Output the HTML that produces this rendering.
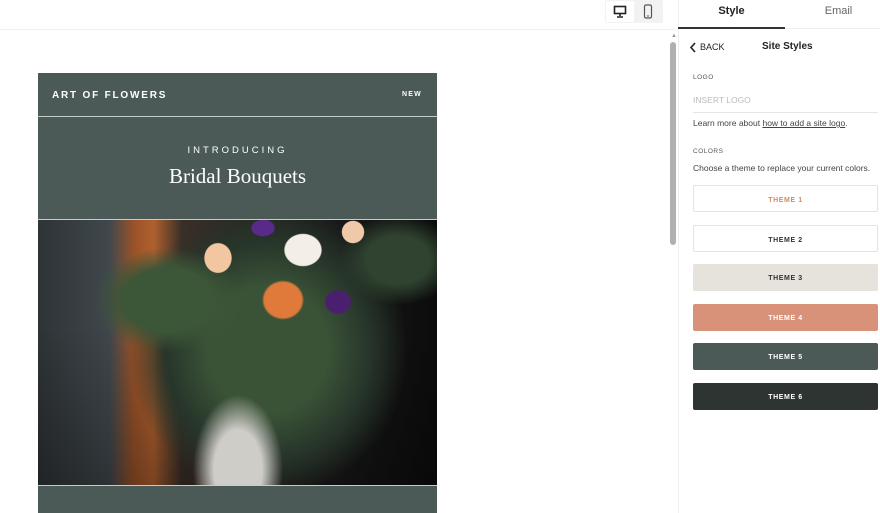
<!DOCTYPE html>
<html><head><style>
*{margin:0;padding:0;box-sizing:border-box}
body{width:880px;height:513px;overflow:hidden;background:#fff;font-family:"Liberation Sans",sans-serif;position:relative}
.abs{position:absolute}
.topline{left:0;top:29px;width:678px;height:1px;background:#f0f0f0}
.dev{left:605px;top:0;width:58px;height:23px;background:#f2f2f2;border-radius:2px}
.panel{left:678px;top:0;width:202px;height:513px;border-left:1px solid #eee}
.card{left:38px;top:73px;width:399px;height:440px;background:#4b5a57}
.photo{left:38px;top:220px;width:399px;height:265px;overflow:hidden;
background:
radial-gradient(ellipse 30px 26px at 265px 30px,#f4efe6 60%,transparent 64%),
radial-gradient(ellipse 22px 24px at 180px 38px,#f2c6a0 60%,transparent 64%),
radial-gradient(ellipse 34px 32px at 245px 80px,#e07a3a 55%,transparent 62%),
radial-gradient(ellipse 22px 20px at 300px 82px,#4a1f70 55%,transparent 62%),
radial-gradient(ellipse 20px 14px at 225px 8px,#5a2a8a 55%,transparent 62%),
radial-gradient(ellipse 18px 18px at 315px 12px,#f0c9a8 60%,transparent 64%),
radial-gradient(ellipse 60px 100px at 200px 250px,#cfcdc8 40%,transparent 75%),
radial-gradient(ellipse 100px 70px at 130px 80px,#3c5638 45%,transparent 75%),
radial-gradient(ellipse 80px 60px at 360px 40px,#2f4330 40%,transparent 75%),
radial-gradient(ellipse 170px 180px at 230px 130px,#3a5337 35%,#27352a 60%,transparent 82%),
linear-gradient(180deg,transparent 40%,rgba(0,0,0,.3) 100%),
linear-gradient(90deg,#2e3336 0%,#40484d 18%,#9a5228 24%,#b0602e 29%,#3a2f28 36%,#1e1e1e 65%,#0c0c0c 100%)}
.tab{top:0;height:29px;font-size:11px;line-height:23px;text-align:center;width:107px}
.th{left:693px;width:185px;height:27px;font-size:7px;font-weight:bold;letter-spacing:.6px;text-align:center;line-height:29px;border-radius:2px}
</style></head><body>
<div class="abs topline"></div>
<div class="abs dev">
 <div class="abs" style="left:1px;top:1px;width:28px;height:21px;background:#fff"></div>
 <svg class="abs" style="left:8px;top:5px" width="14" height="13" viewBox="0 0 14 13"><rect x="1.5" y="1.5" width="11" height="7" fill="none" stroke="#222" stroke-width="1.6"/><path d="M7 9v2M4 12h6" stroke="#222" stroke-width="1.6"/></svg>
 <svg class="abs" style="left:38px;top:4px" width="10" height="15" viewBox="0 0 10 15"><rect x="1.5" y="1" width="7" height="13" rx="1.5" fill="none" stroke="#555" stroke-width="1.2"/><path d="M4 12h2" stroke="#555"/></svg>
</div>
<div class="abs panel"></div>
<div class="abs tab" style="left:678px;font-weight:bold;color:#222">Style</div>
<div class="abs" style="left:678px;top:27px;width:107px;height:2px;background:#333"></div>
<div class="abs tab" style="left:785px;color:#666">Email</div>
<div class="abs" style="left:785px;top:28px;width:95px;height:1px;background:#eee"></div>
<div class="abs" style="left:671px;top:33px;font-size:6px;color:#999">▲</div>
<div class="abs" style="left:670px;top:42px;width:6px;height:203px;background:#b0b0b0;border-radius:3px"></div>
<svg class="abs" style="left:689px;top:42px" width="8" height="11"><path d="M6 1L2 5.5 6 10" fill="none" stroke="#222" stroke-width="1.6"/></svg>
<div class="abs" style="left:700px;top:42px;font-size:9px;color:#222">BACK</div>
<div class="abs" style="left:762px;top:41px;font-size:10px;font-weight:bold;color:#222">Site Styles</div>
<div class="abs" style="left:693px;top:74px;font-size:6.5px;color:#555;letter-spacing:.5px">LOGO</div>
<div class="abs" style="left:693px;top:95px;font-size:8.5px;color:#bbb">INSERT LOGO</div>
<div class="abs" style="left:693px;top:112px;width:185px;height:1px;background:#e5e5e5"></div>
<div class="abs" style="left:693px;top:118px;font-size:8.5px;color:#444">Learn more about <u>how to add a site logo</u>.</div>
<div class="abs" style="left:693px;top:148px;font-size:6.5px;color:#555;letter-spacing:.5px">COLORS</div>
<div class="abs" style="left:693px;top:163px;font-size:8.5px;color:#444">Choose a theme to replace your current colors.</div>
<div class="abs th" style="top:185px;border:1px solid #e3e3e3;color:#d9885a">THEME 1</div>
<div class="abs th" style="top:225px;border:1px solid #e3e3e3;color:#333">THEME 2</div>
<div class="abs th" style="top:264px;background:#e6e2dc;color:#333">THEME 3</div>
<div class="abs th" style="top:304px;background:#d9927a;color:#fff">THEME 4</div>
<div class="abs th" style="top:343px;background:#4b5a57;color:#fff">THEME 5</div>
<div class="abs th" style="top:383px;background:#2d3432;color:#fff">THEME 6</div>

<div class="abs card"></div>
<div class="abs" style="left:52px;top:90px;font-size:10px;font-weight:bold;color:#fff;letter-spacing:1.8px">ART OF FLOWERS</div>
<div class="abs" style="left:402px;top:91px;font-size:7px;font-weight:bold;color:#fff;letter-spacing:1.2px">NEW</div>
<div class="abs" style="left:38px;top:116px;width:399px;height:1px;background:#c5ccca"></div>
<div class="abs" style="left:38px;top:145px;width:399px;text-align:center;font-size:9.5px;color:#fff;letter-spacing:3px">INTRODUCING</div>
<div class="abs" style="left:38px;top:164px;width:399px;text-align:center;font-size:21px;color:#fff;font-family:'Liberation Serif',serif">Bridal Bouquets</div>
<div class="abs" style="left:38px;top:219px;width:399px;height:1px;background:#c5ccca"></div>
<div class="abs photo"></div>
<div class="abs" style="left:38px;top:485px;width:399px;height:1px;background:#c5ccca"></div>
</body></html>
